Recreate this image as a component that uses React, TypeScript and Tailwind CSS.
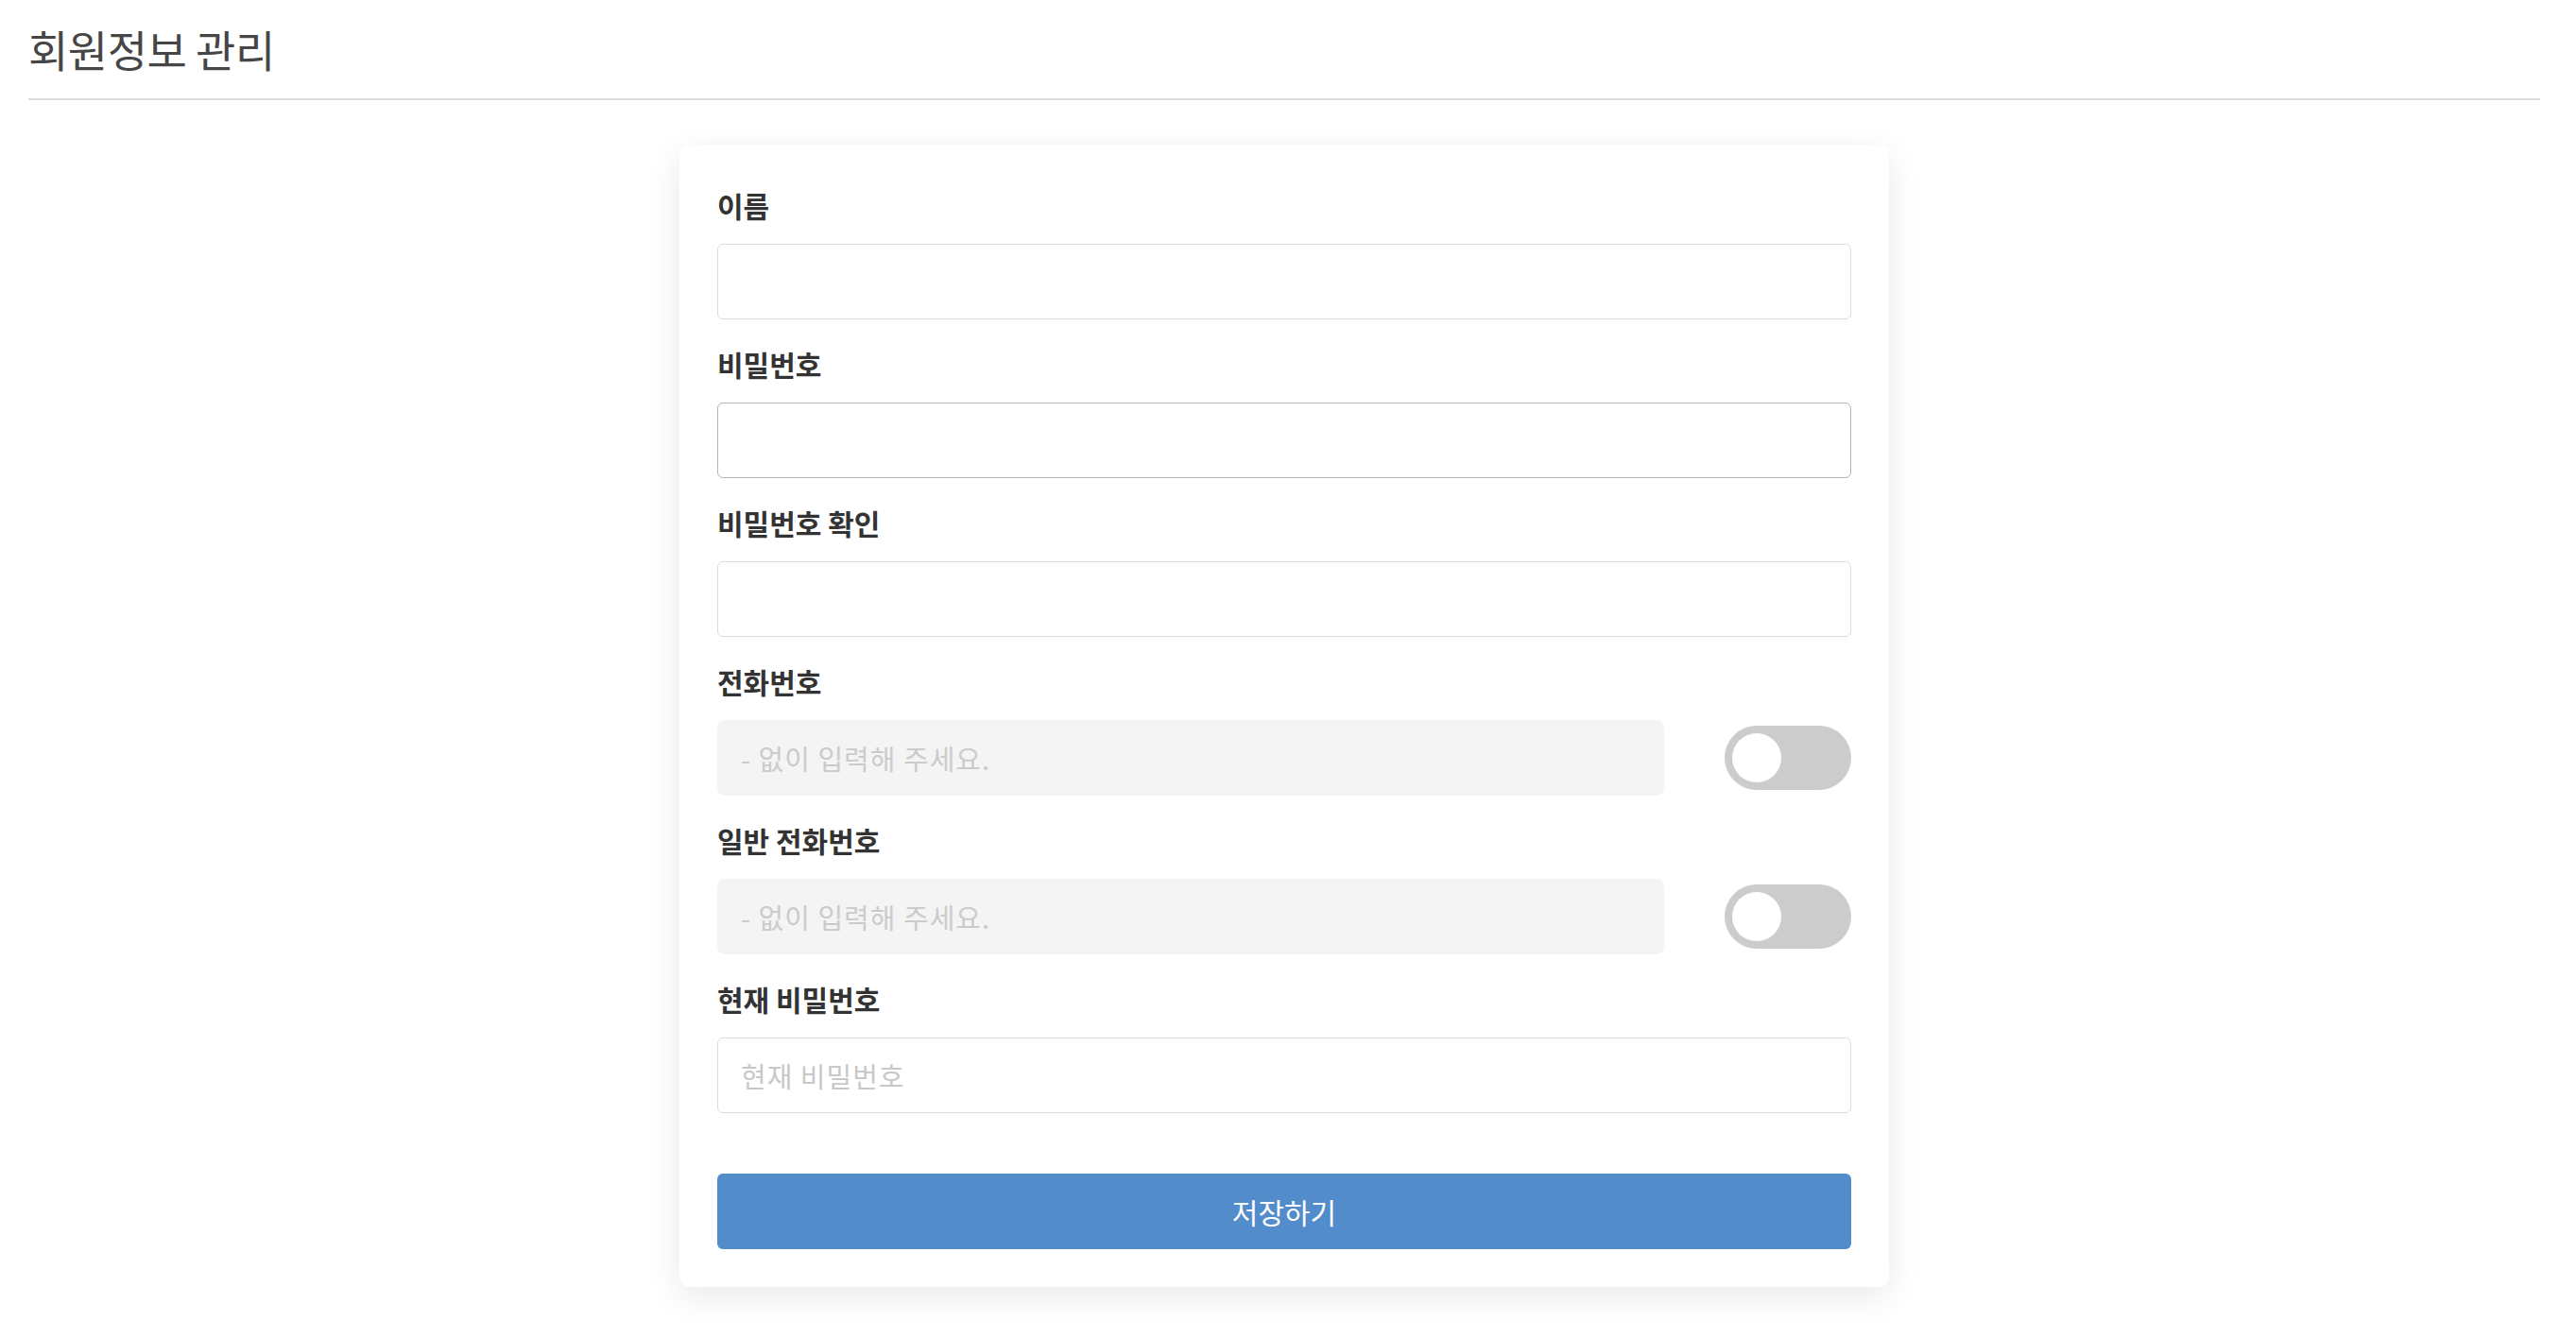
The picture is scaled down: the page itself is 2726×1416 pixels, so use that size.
import { useState } from "react";

const FONT = "font-['Noto_Sans_CJK_KR','Noto_Sans',sans-serif]";

function Toggle({ on, onChange }: { on: boolean; onChange: () => void }) {
  return (
    <button
      type="button"
      onClick={onChange}
      className={`flex h-[68px] w-[134px] shrink-0 items-center rounded-full p-[8px] ${
        on ? "justify-end bg-[#538ccb]" : "justify-start bg-[#cccccc]"
      }`}
    >
      <span className="block h-[52px] w-[52px] rounded-full bg-white" />
    </button>
  );
}

function Label({ children }: { children: string }) {
  return (
    <label className="mb-[20px] block text-[30px] font-bold leading-[42px] text-[#333333]">
      {children}
    </label>
  );
}

export default function App() {
  const [phoneOn, setPhoneOn] = useState(false);
  const [telOn, setTelOn] = useState(false);

  const base =
    "block h-[80px] w-full rounded-[6px] border bg-white px-[24px] text-[29px] tracking-[1px] text-[#333] outline-none placeholder:text-[#c8c8c8]";
  const inputCls = `${base} border-[#dddddd]`;
  const activeCls = `${base} border-[#b4b4b4]`;
  const grayCls =
    "block h-[80px] w-full rounded-[8px] border border-[#f4f4f4] bg-[#f4f4f4] px-[24px] text-[29px] tracking-[1px] text-[#333] outline-none placeholder:text-[#cbcbcb]";

  return (
    <div className={`min-h-screen bg-white ${FONT}`}>
      {/* Page header */}
      <div className="pl-[30px] pr-[38px]">
        <h1 className="border-b-2 border-[#dddddd] pb-[20px] pt-[18px] text-[46px] font-normal leading-[66px] tracking-[-0.5px] text-[#464646]">
          회원정보 관리
        </h1>

        {/* Form card */}
        <div className="mx-auto mt-[47px] w-[1280px] rounded-[10px] bg-white px-[40px] pb-[40px] pt-[43px] shadow-[0_10px_36px_rgba(0,0,0,0.09)]">
          <div className="flex flex-col gap-[26px]">
            <div>
              <Label>이름</Label>
              <input type="text" className={inputCls} />
            </div>
            <div>
              <Label>비밀번호</Label>
              <input type="password" className={activeCls} />
            </div>
            <div>
              <Label>비밀번호 확인</Label>
              <input type="password" className={inputCls} />
            </div>
            <div>
              <Label>전화번호</Label>
              <div className="flex items-center gap-[64px]">
                <input type="text" placeholder="- 없이 입력해 주세요." className={grayCls} />
                <Toggle on={phoneOn} onChange={() => setPhoneOn(!phoneOn)} />
              </div>
            </div>
            <div>
              <Label>일반 전화번호</Label>
              <div className="flex items-center gap-[64px]">
                <input type="text" placeholder="- 없이 입력해 주세요." className={grayCls} />
                <Toggle on={telOn} onChange={() => setTelOn(!telOn)} />
              </div>
            </div>
            <div>
              <Label>현재 비밀번호</Label>
              <input type="password" placeholder="현재 비밀번호" className={inputCls} />
            </div>
          </div>

          <button
            type="button"
            className="mt-[64px] block h-[80px] w-full rounded-[6px] bg-[#538ccb] text-[30px] text-white"
          >
            저장하기
          </button>
        </div>
      </div>
    </div>
  );
}
